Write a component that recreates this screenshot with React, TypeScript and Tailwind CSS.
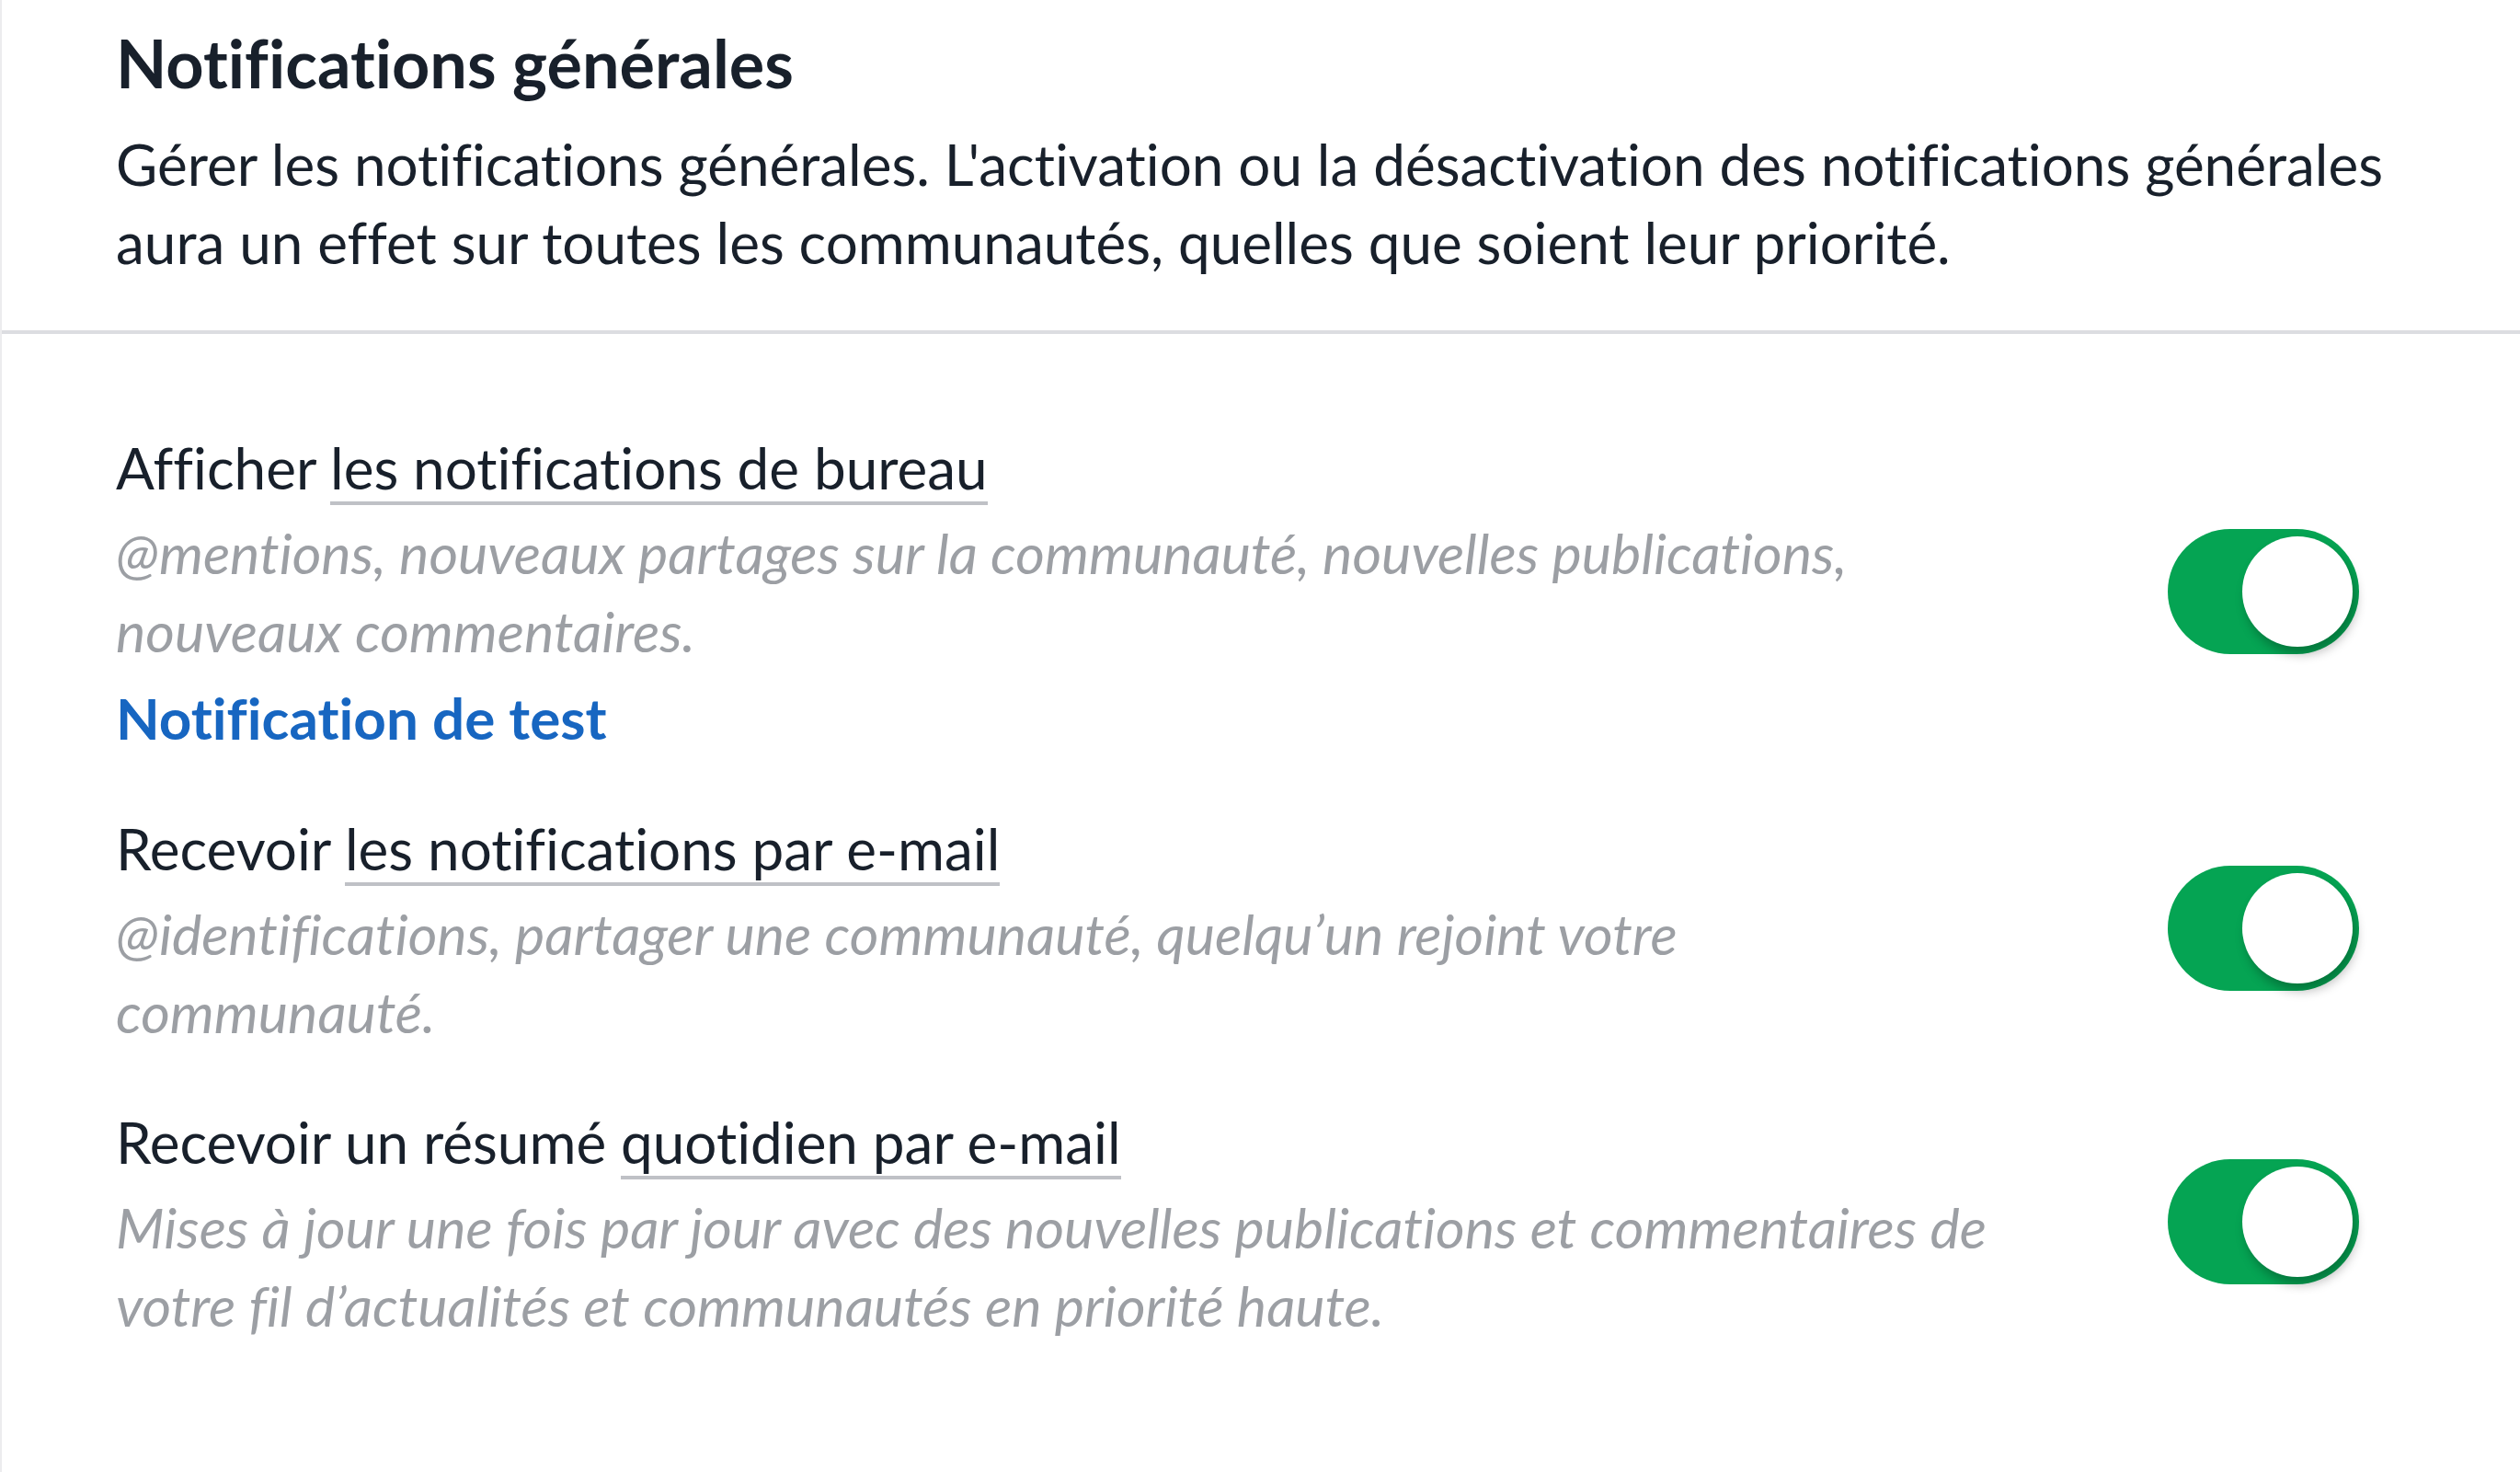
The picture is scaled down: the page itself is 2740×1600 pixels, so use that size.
import React from "react";

const rows = [
  {
    lead: "Afficher ",
    link: "les notifications de bureau",
    desc: "@mentions, nouveaux partages sur la communauté, nouvelles publications, nouveaux commentaires.",
    test: true,
  },
  {
    lead: "Recevoir ",
    link: "les notifications par e-mail",
    desc: "@identifications, partager une communauté, quelqu’un rejoint votre communauté.",
    test: false,
  },
  {
    lead: "Recevoir un résumé ",
    link: "quotidien par e-mail",
    desc: "Mises à jour une fois par jour avec des nouvelles publications et commentaires de votre fil d’actualités et communautés en priorité haute.",
    test: false,
  },
];

function Toggle() {
  return (
    <div className="mb-[4px] flex h-[136px] w-[208px] shrink-0 items-center justify-end rounded-full bg-[#05a453] pr-[7px]">
      <div className="h-[120px] w-[120px] rounded-full bg-white shadow-[4px_8px_12px_rgba(0,0,0,0.28)]" />
    </div>
  );
}

export default function App() {
  return (
    <div className="h-[1600px] w-full border-l-2 border-[#ececee] bg-white font-['Lato',sans-serif] text-[#18202b] [font-variant-ligatures:none]">
      <div className="pt-[25px] pr-[60px] pb-[53px] pl-[124px]">
        <h1 className="text-[72px] leading-[86px] font-bold">Notifications générales</h1>
        <p className="mt-[25px] text-[62px] leading-[85px]">
          Gérer les notifications générales. L'activation ou la désactivation des notifications générales aura un effet sur
          toutes les communautés, quelles que soient leur priorité.
        </p>
      </div>
      <div className="h-[4px] bg-[#dcdde1]" />
      <div className="flex flex-col gap-[57px] pt-[103px] pl-[124px] pr-[175px]">
        {rows.map((r, i) => (
          <div key={i} className="flex items-center">
            <div className="flex-1 pr-[194px]">
              <div className="text-[62px] leading-[85px]">
                {r.lead}
                <span className="border-b-4 border-[#bfc1c6]">{r.link}</span>
              </div>
              <p className="mt-[7px] text-[61px] leading-[85px] text-[#9c9fa4] italic">{r.desc}</p>
              {r.test && (
                <a href="#" className="mt-[10px] block text-[62px] leading-[85px] font-bold text-[#1766c1]">
                  Notification de test
                </a>
              )}
            </div>
            <Toggle />
          </div>
        ))}
      </div>
    </div>
  );
}
